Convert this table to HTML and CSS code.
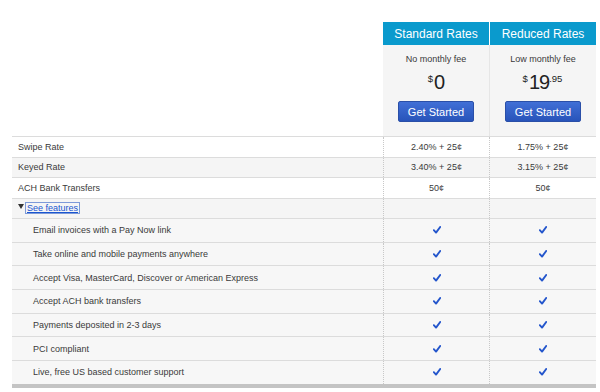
FILE: index.html
```html
<!DOCTYPE html>
<html>
<head>
<meta charset="utf-8">
<link rel="stylesheet" href="styles.css">
</head>
<body>
<div class="table">
  <div class="row head">
    <div class="blank"></div>
    <div class="plan">
      <div class="plan-title">Standard Rates</div>
      <div class="plan-body">
        <div class="fee">No monthly fee</div>
        <div class="price"><sup>$</sup>0</div>
        <button class="btn">Get Started</button>
      </div>
    </div>
    <div class="plan plan2">
      <div class="plan-title">Reduced Rates</div>
      <div class="plan-body">
        <div class="fee">Low monthly fee</div>
        <div class="price"><sup>$</sup>19<sup>.95</sup></div>
        <button class="btn">Get Started</button>
      </div>
    </div>
  </div>

  <div class="row rate white"><div class="label">Swipe Rate</div><div class="val">2.40% + 25¢</div><div class="val">1.75% + 25¢</div></div>
  <div class="row rate grey"><div class="label">Keyed Rate</div><div class="val">3.40% + 25¢</div><div class="val">3.15% + 25¢</div></div>
  <div class="row rate white"><div class="label">ACH Bank Transfers</div><div class="val">50¢</div><div class="val">50¢</div></div>
  <div class="row rate grey"><div class="label toggle"><svg class="tri" viewBox="0 0 6 5"><path d="M0 0 L6 0 L3 5 Z"/></svg><a class="link">See features</a></div><div class="val"></div><div class="val"></div></div>

  <div class="row feat"><div class="label">Email invoices with a Pay Now link</div><div class="val"><svg class="chk" viewBox="0 0 10 10"><path d="M1 5.2 L3.8 8.2 L9 1.2"/></svg></div><div class="val"><svg class="chk" viewBox="0 0 10 10"><path d="M1 5.2 L3.8 8.2 L9 1.2"/></svg></div></div>
  <div class="row feat"><div class="label">Take online and mobile payments anywhere</div><div class="val"><svg class="chk" viewBox="0 0 10 10"><path d="M1 5.2 L3.8 8.2 L9 1.2"/></svg></div><div class="val"><svg class="chk" viewBox="0 0 10 10"><path d="M1 5.2 L3.8 8.2 L9 1.2"/></svg></div></div>
  <div class="row feat"><div class="label">Accept Visa, MasterCard, Discover or American Express</div><div class="val"><svg class="chk" viewBox="0 0 10 10"><path d="M1 5.2 L3.8 8.2 L9 1.2"/></svg></div><div class="val"><svg class="chk" viewBox="0 0 10 10"><path d="M1 5.2 L3.8 8.2 L9 1.2"/></svg></div></div>
  <div class="row feat"><div class="label">Accept ACH bank transfers</div><div class="val"><svg class="chk" viewBox="0 0 10 10"><path d="M1 5.2 L3.8 8.2 L9 1.2"/></svg></div><div class="val"><svg class="chk" viewBox="0 0 10 10"><path d="M1 5.2 L3.8 8.2 L9 1.2"/></svg></div></div>
  <div class="row feat"><div class="label">Payments deposited in 2-3 days</div><div class="val"><svg class="chk" viewBox="0 0 10 10"><path d="M1 5.2 L3.8 8.2 L9 1.2"/></svg></div><div class="val"><svg class="chk" viewBox="0 0 10 10"><path d="M1 5.2 L3.8 8.2 L9 1.2"/></svg></div></div>
  <div class="row feat"><div class="label">PCI compliant</div><div class="val"><svg class="chk" viewBox="0 0 10 10"><path d="M1 5.2 L3.8 8.2 L9 1.2"/></svg></div><div class="val"><svg class="chk" viewBox="0 0 10 10"><path d="M1 5.2 L3.8 8.2 L9 1.2"/></svg></div></div>
  <div class="row feat last"><div class="label">Live, free US based customer support</div><div class="val"><svg class="chk" viewBox="0 0 10 10"><path d="M1 5.2 L3.8 8.2 L9 1.2"/></svg></div><div class="val"><svg class="chk" viewBox="0 0 10 10"><path d="M1 5.2 L3.8 8.2 L9 1.2"/></svg></div></div>
</div>
</body>
</html>
```

FILE: styles.css
```css
html, body {
  margin: 0;
  padding: 0;
  background: #ffffff;
}
body {
  padding: 22px 4px 0 12px;
  font-family: "Liberation Sans", Arial, sans-serif;
  color: #3a3a3a;
}
.table {
  width: 584px;
}
.row {
  display: grid;
  grid-template-columns: 371px 106px 107px;
}
.head .plan {
  display: flex;
  flex-direction: column;
}
.plan-title {
  height: 23px;
  background: #0a9acd;
  color: #fff;
  font-size: 12px;
  line-height: 24px;
  text-align: center;
}
.plan2 .plan-title {
  border-left: 1px solid #fff;
}
.plan-body {
  height: 91px;
  box-sizing: border-box;
  background: #f5f5f5;
  display: flex;
  flex-direction: column;
  align-items: center;
  padding-top: 9px;
}
.plan2 .plan-body {
  border-left: 1px solid #e6e6e6;
}
.fee {
  font-size: 9px;
  line-height: 10px;
  color: #3a3a3a;
}
.price {
  margin-top: 7px;
  font-size: 20px;
  line-height: 22px;
  color: #222;
  letter-spacing: -1px;
}
.price sup {
  font-size: 9.5px;
  vertical-align: 7px;
  letter-spacing: 0;
  line-height: 0;
  margin-right: 1px;
}
.btn {
  margin-top: 8px;
  width: 76px;
  height: 21px;
  border: 1px solid #2a4fa8;
  border-radius: 2px;
  background: linear-gradient(#416fd6, #2854ba);
  color: #fff;
  font-family: "Liberation Sans", Arial, sans-serif;
  font-size: 11px;
  padding: 0;
}
.rate {
  border-top: 1px solid #dcdcdc;
  height: 19.5px;
  font-size: 9px;
}
.rate.white { background: #fff; }
.rate.grey { background: #f5f5f5; }
.label {
  display: flex;
  align-items: center;
  padding-left: 6px;
  color: #3a3a3a;
}
.val {
  display: flex;
  align-items: center;
  justify-content: center;
  border-left: 1px dotted #c8c8c8;
  color: #3a3a3a;
}
.toggle .tri {
  width: 6px;
  height: 5px;
  fill: #333;
  margin-right: 2px;
  position: relative;
  top: -2px;
}
.link {
  color: #1a55d0;
  text-decoration: underline;
  outline: 1px solid #7d9ad8;
  outline-offset: 0;
  padding: 0 1px;
  line-height: 10px;
}
.feat {
  border-top: 1px solid #dcdcdc;
  height: 22.7px;
  background: #f7f7f7;
  font-size: 9px;
}
.feat .label {
  padding-left: 21px;
}
.feat.last {
  border-bottom: 4px solid #c4c4c4;
}
.chk {
  width: 8px;
  height: 8px;
  fill: none;
  stroke: #2456cc;
  stroke-width: 2.4;
  stroke-linecap: round;
  stroke-linejoin: round;
}
```
